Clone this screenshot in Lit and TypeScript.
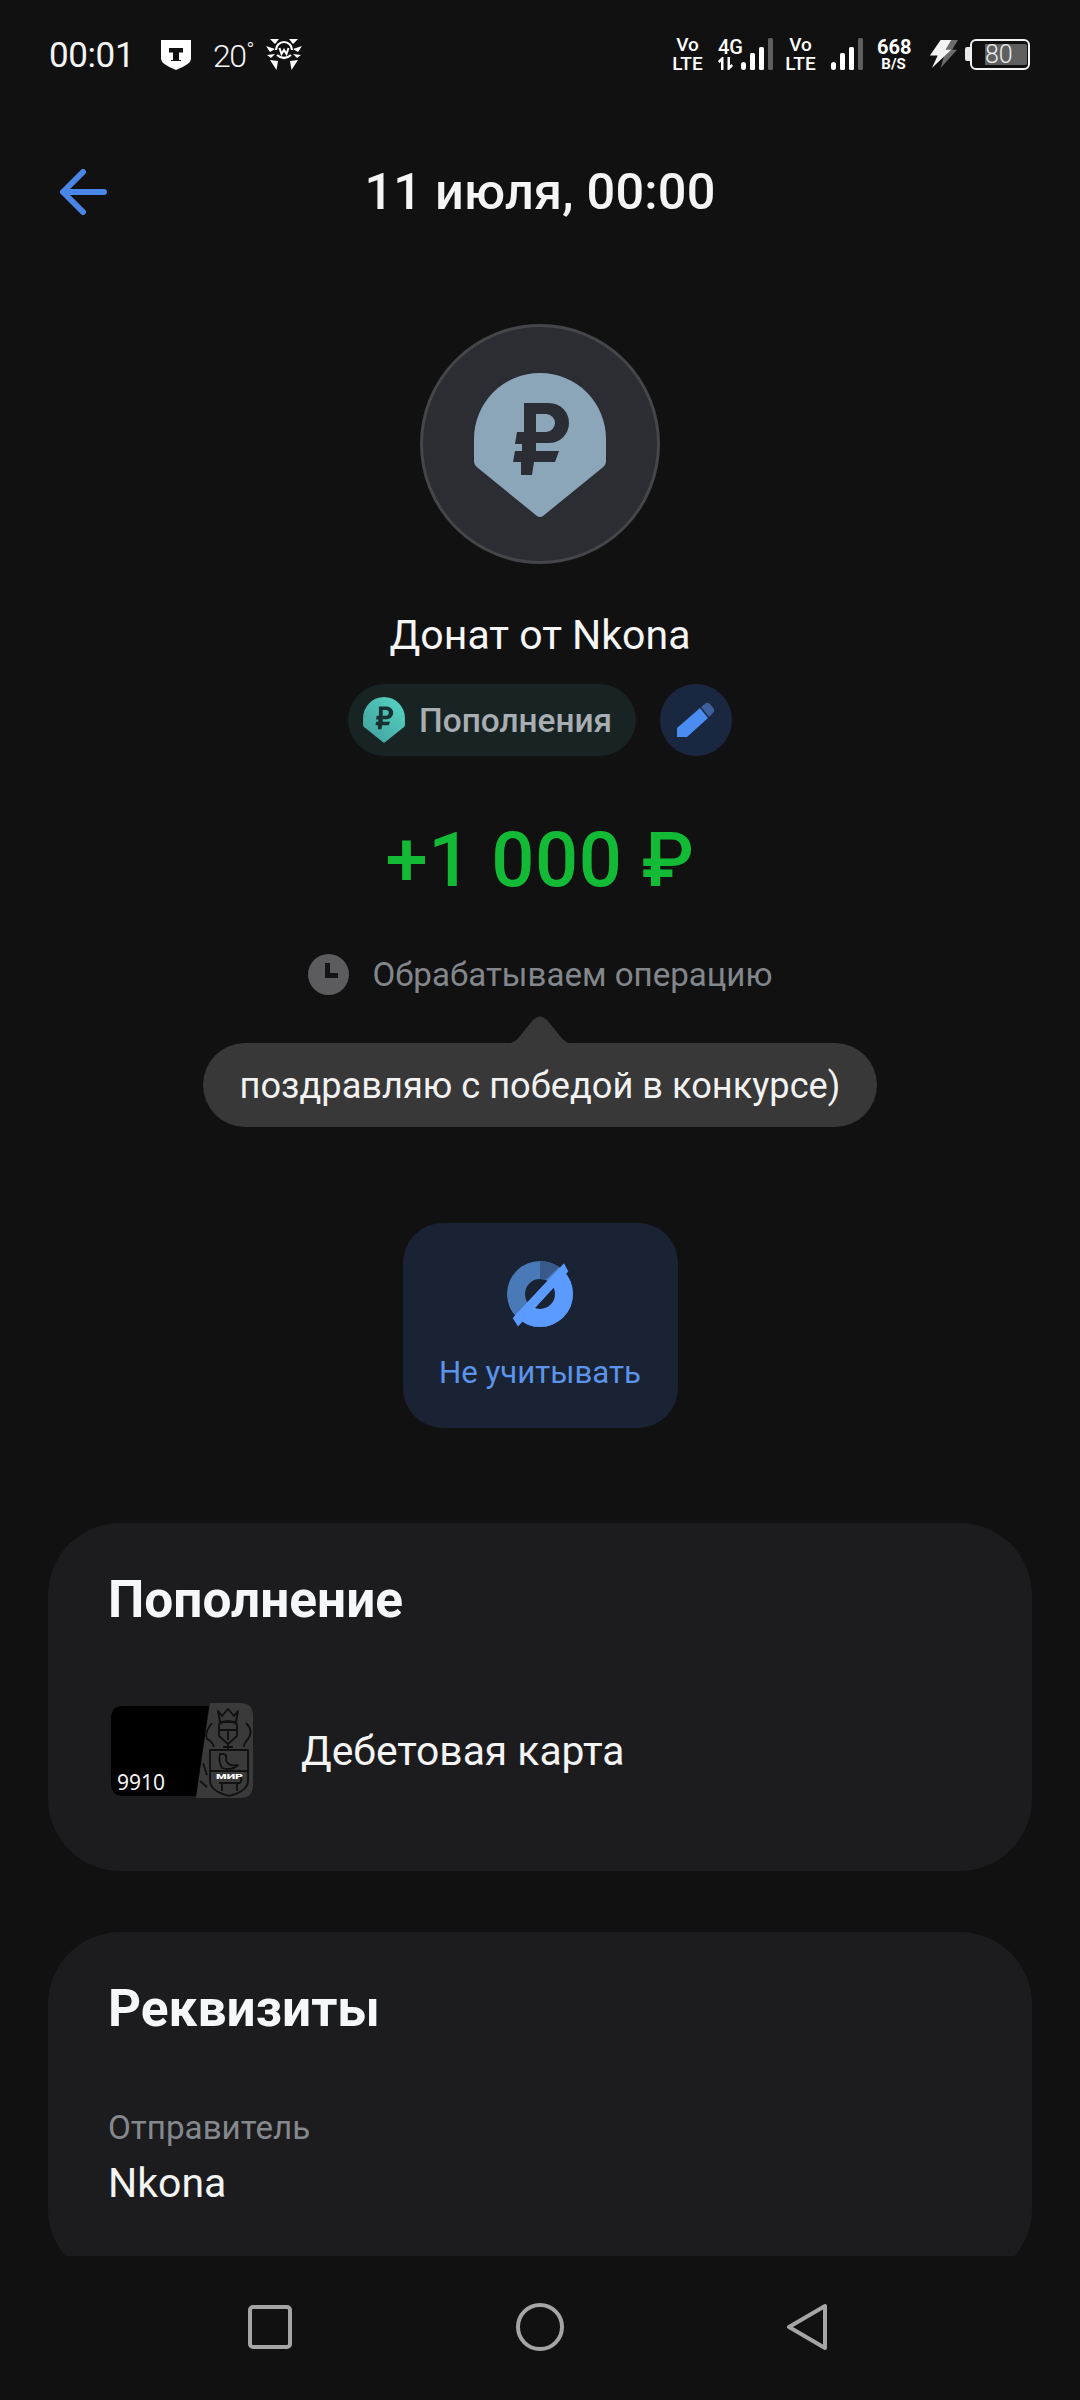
import { LitElement, html, css, svg } from "lit";
import { customElement } from "lit/decorators.js";

const RUB = "M50 30H75A20 20 0 0 1 75 70H62V78H85L81 89H60L58 102H47V89H39L41 78H48V71H41L43 59H50ZM62 41V59H72A9 9 0 0 0 72 41Z";
const SHIELD = "M0 66A66 66 0 0 1 132 66V88Q132 92 128 95L69 143Q66 145 63 143L4 95Q0 92 0 88Z";

const bars = () => svg`
  <svg class="bars" width="32" height="32" viewBox="0 0 32 32">
    <rect x="0" y="24" width="5" height="8" rx="2.5" fill="#fff"/>
    <rect x="9" y="15" width="5" height="17" rx="1.5" fill="#fff"/>
    <rect x="18" y="9" width="5" height="23" rx="1.5" fill="#fff"/>
    <rect x="27" y="0" width="5" height="32" rx="1.5" fill="#5e5e5e"/>
  </svg>`;

@customElement("app-root")
export class AppRoot extends LitElement {
  static styles = css`
    :host { display: block; font-family: Roboto, "Noto Sans", sans-serif; color: #fff; }
    .page { width: 1080px; height: 2400px; background: #111112; display: flex; flex-direction: column; overflow: hidden; }
    .status { height: 110px; flex: none; display: flex; align-items: center; padding: 0 50px 2px 49px; box-sizing: border-box; }
    .time { font-size: 35px; letter-spacing: -0.4px; width: 112px; font-weight: 400; color: #f4f4f4; margin-top: 3px; }
    .temp { font-size: 32px; font-weight: 300; letter-spacing: -1.6px; margin-left: 22px; width: 53px; color: #f4f4f4; white-space: nowrap; margin-top: 3px; }
    .temp span { font-size: 22px; vertical-align: 9px; letter-spacing: 0; margin-left: 1px; }
    .sicons { margin-left: auto; display: flex; align-items: center; height: 32px; }
    .volte { text-align: center; font-size: 19px; line-height: 19px; font-weight: 500; width: 31px; }
    .net { width: 23px; font-size: 20px; line-height: 18px; font-weight: 500; margin-left: 15px; white-space: nowrap; display: flex; flex-direction: column; gap: 1px; }
    .bars { display: block; }
    .speed { text-align: center; font-size: 20px; line-height: 20px; font-weight: 700; width: 33px; margin-left: 14px; white-space: nowrap; }
    .speed span { display: block; font-size: 15px; line-height: 14px; margin-left: -2px; margin-right: -2px; }
    .batt { width: 60px; height: 31px; border: 2.5px solid #f2f2f2; border-radius: 6px; box-sizing: border-box; display: flex; align-items: center; justify-content: flex-end; }
    .batt span { width: 42px; height: 21px; background: #5f5f5f; font-size: 25px; line-height: 21px; text-align: left; color: #ececec; font-weight: 300; border-radius: 0 2px 2px 0; margin-right: 1px; }
    .nub { width: 5px; height: 14px; background: #e8e8e8; border-radius: 2px 0 0 2px; margin-left: 7px; }
    .scroll { flex: 1; min-height: 0; overflow: hidden; display: flex; flex-direction: column; align-items: center; }
    .head { width: 100%; height: 162px; flex: none; display: flex; align-items: center; justify-content: center; position: relative; }
    .back { position: absolute; left: 60px; top: 59px; }
    .title { font-size: 50.5px; font-weight: 500; color: #f5f5f5; letter-spacing: 0.2px; }
    .avatar { width: 240px; height: 240px; box-sizing: border-box; border-radius: 50%; flex: none; margin-top: 52px; background: #2b2d33; border: 3px solid #45464a; display: flex; align-items: center; justify-content: center; }
    .avatar svg { margin-top: 3px; }
    .name { margin-top: 43px; font-size: 41px; line-height: 56px; color: #f6f6f6; }
    .chips { margin-top: 21px; display: flex; gap: 24px; height: 72px; flex: none; }
    .chip { height: 72px; box-sizing: border-box; border-radius: 36px; background: #182324; display: flex; align-items: center; gap: 14px; padding: 0 0 0 15px; font-size: 33.4px; font-weight: 500; color: #a8aeb2; width: 288px; }
    .pen { width: 72px; height: 72px; border-radius: 50%; background: #1a2740; display: flex; align-items: center; justify-content: center; }
    .amount { margin-top: 59px; font-size: 76px; line-height: 90px; font-weight: 500; color: #12ba35; letter-spacing: 0.5px; }
    .state { margin-top: 47px; height: 44px; display: flex; align-items: center; gap: 24px; font-size: 33.1px; color: #83878c; flex: none; }
    .bubble { position: relative; margin-top: 47px; width: 674px; height: 84px; flex: none; border-radius: 42px; background: #383839; display: flex; align-items: center; justify-content: center; font-size: 36.2px; color: #f2f2f2; }
    .tail { position: absolute; left: 304px; top: -27px; display: block; }
    .skip { margin-top: 96px; width: 275px; height: 205px; flex: none; border-radius: 40px; background: #1a2334; display: flex; flex-direction: column; align-items: center; padding-top: 37px; box-sizing: border-box; color: #5b94ea; font-size: 31.2px; }
    .skip div { margin-top: 25px; line-height: 40px; }
    .card { width: 984px; flex: none; box-sizing: border-box; border-radius: 72px; background: #1c1c1e; padding: 47px 60px 72px; }
    .c1 { margin-top: 95px; }
    .c2 { margin-top: 61px; padding-bottom: 74px; }
    .ctitle { font-size: 51.4px; line-height: 60px; font-weight: 700; color: #f6f7f9; }
    .row { margin-top: 73px; display: flex; align-items: center; gap: 47px; font-size: 40.8px; color: #f4f4f4; }
    .label { margin-top: 69px; font-size: 33.2px; line-height: 40px; color: #85888d; }
    .value { margin-top: 11px; font-size: 41px; line-height: 48px; color: #f4f4f4; }
    .nav { height: 144px; flex: none; background: #111112; display: flex; align-items: center; position: relative; }
    .nav svg { display: block; }
    .n1 { margin-left: 248px; margin-top: -2px; }
    .n2 { margin-left: 224px; margin-top: -2px; }
    .n3 { margin-left: 222px; margin-top: -2px; }
  `;

  render() {
    return html`<div class="page">
      <div class="status">
        <span class="time">00:01</span>
        <svg width="30" height="30" viewBox="0 0 30 30" style="margin-top:2px"><path d="M0 0H30V19Q30 24 15 30Q0 24 0 19Z" fill="#fff"/><path d="M8 8H22V12.500H18V20H20V21H10V20H12V12.500H8Z" fill="#111"/></svg>
        <span class="temp">20<span>°</span></span>
        <svg width="36" height="32" viewBox="0 0 36 32" fill="#fff">
          <path d="M4 1L13 1L9 6ZM23 1L32 1L27 6ZM0 8L9 11L4 14ZM36 8L27 11L32 14ZM1 17L9 16L5 20ZM35 17L27 16L31 20ZM4 22L12 23L10.500 32ZM24 23L32 22L25.500 32Z"/>
          <path d="M10 12A8 8 0 0 1 26 12" fill="none" stroke="#fff" stroke-width="2.200"/>
          <path d="M11 17Q18 23 25 17" fill="none" stroke="#fff" stroke-width="2.200"/>
          <path d="M13.500 10L15.500 16L18 12L20.500 16L22.500 10" fill="none" stroke="#fff" stroke-width="2"/>
        </svg>
        <div class="sicons">
          <div class="volte">Vo<br />LTE</div>
          <div class="net">
            <span>4G</span>
            <svg width="16" height="13" viewBox="0 0 16 13" fill="#fff"><path d="M0 4L4 0H5.500V13H3V4.500L1.500 6ZM9.500 0H12V8.500L13.500 7L15 9L11 13H9.500Z"/></svg>
          </div>
          ${bars()}
          <div class="volte" style="margin-left:12px">Vo<br />LTE</div>
          <div style="width:15px"></div>
          ${bars()}
          <div class="speed">668<span>B/S</span></div>
          <svg style="margin-left:19px" width="29" height="29" viewBox="0 0 30 30"><path d="M18 0H30L24 10H29L12 29L16 15H12Z" fill="#6c6c6c"/><path d="M12 0H23L17 10H23L3 29L9 16H1Z" fill="#f4f4f4"/></svg>
          <div class="nub"></div>
          <div class="batt"><span>80</span></div>
        </div>
      </div>
      <div class="scroll">
        <div class="head">
          <svg class="back" width="47" height="46" viewBox="0 0 47 46" fill="none" stroke="#4a85e8" stroke-width="6" stroke-linecap="round" stroke-linejoin="round"><path d="M23 3L3 23L23 43M4 23H44"/></svg>
          <span class="title">11 июля, 00:00</span>
        </div>
        <div class="avatar">
          <svg width="132" height="145" viewBox="0 0 132 145"><path d="${SHIELD}" fill="#8ba5b9"/><path d="${RUB}" fill="#2b2d35" fill-rule="evenodd"/></svg>
        </div>
        <div class="name">Донат от Nkona</div>
        <div class="chips">
          <div class="chip">
            <svg width="42" height="46" viewBox="0 0 132 145"><defs><linearGradient id="teal" x1="0" y1="1" x2="1" y2="0"><stop offset="0" stop-color="#3f9d9a"/><stop offset="1" stop-color="#58d6c8"/></linearGradient></defs><path d="${SHIELD}" fill="url(#teal)"/><path d="${RUB}" fill="#18302f" fill-rule="evenodd"/></svg>
            <span>Пополнения</span>
          </div>
          <div class="pen">
            <svg width="38" height="37" viewBox="0 0 38 37"><path d="M24 5L29 1Q31 0 33 2L37 7Q38 9 36 11L32 15Z" fill="#3c5f9c"/><path d="M23 6L31 16L10 35H0V26Z" fill="#4a8cf0"/></svg>
          </div>
        </div>
        <div class="amount">+1 000 ₽</div>
        <div class="state">
          <svg width="41" height="41" viewBox="0 0 41 41"><circle cx="20.500" cy="20.500" r="20.500" fill="#5c5c5e"/><path d="M17 9H22V19H30V24H17Z" fill="#141415"/></svg>
          <span>Обрабатываем операцию</span>
        </div>
        <div class="bubble">
          <svg class="tail" width="66" height="28" viewBox="0 0 66 28"><path d="M0 28Q8 27 13 20L26 4Q33 -3 40 4L53 20Q58 27 66 28Z" fill="#383839"/></svg>
          поздравляю с победой в конкурсе)
        </div>
        <div class="skip">
          <svg width="66" height="68" viewBox="0 0 66 68">
            <defs>
              <clipPath id="low"><path d="M57 3.300L5.700 58L30 70H80V0Z"/></clipPath>
              <clipPath id="lower"><path d="M61.300 11.600L11 66.600L40 80H80V10Z"/></clipPath>
            </defs>
            <path d="M0 34A33 33 0 1 1 66 34A33 33 0 1 1 0 34ZM18 34A15 15 0 1 0 48 34A15 15 0 1 0 18 34Z" fill="#4a79b8" fill-rule="evenodd"/>
            <path d="M33 1A33 33 0 0 1 52 7L38 20A15 15 0 0 0 33 19Z" fill="#39598a"/>
            <g clip-path="url(#low)"><circle cx="33" cy="34" r="33" fill="#5b9bff"/></g>
            <g clip-path="url(#lower)"><circle cx="33" cy="34" r="15" fill="#1a2334"/></g>
            <path d="M57 3.300L61.300 11.600L11 66.600L5.700 58Z" fill="#5b9bff"/>
          </svg>
          <div>Не учитывать</div>
        </div>
        <div class="card c1">
          <div class="ctitle">Пополнение</div>
          <div class="row">
            <svg width="144" height="96" viewBox="0 0 144 96" style="flex:none;margin-left:2px">
              <path d="M100 0H130Q143 0 143 13V82Q143 95 130 95H86Z" fill="#3a3a3a"/>
              <path d="M13 3H99L86 93H13Q1 93 1 80V16Q1 3 13 3Z" fill="#000"/>
              <g fill="none" stroke="#101010" stroke-width="1.800" stroke-linejoin="round">
                <path d="M108 8L112 13L118 6L124 13L128 8L126 19H110Z"/>
                <path d="M109 21Q118 15 127 21V33L118 41L109 33ZM110 27H126M118 27V37M118 41V47M113 44H123"/>
                <path d="M100 47H138V78Q138 88 119 93Q100 88 100 78ZM100 68H138"/>
                <path d="M110 51Q118 50 116 57Q118 64 128 62Q122 68 112 65Q108 58 110 51Z"/>
                <path d="M109 80H130M112 80V88M127 80V88M130 80Q133 76 130 74"/>
                <path d="M102 20Q94 30 97 36Q102 38 104 44M136 20Q144 28 138 36Q134 40 134 44M93 60L97 72M90 78L97 84"/>
              </g>
              <text x="7" y="87" font-family="'Noto Sans',sans-serif" font-size="21" fill="#f2f2f2">9910</text>
              <text x="106" y="76" font-family="Roboto,sans-serif" font-size="8" font-weight="900" fill="#fff" textLength="27" lengthAdjust="spacingAndGlyphs">МИР</text>
            </svg>
            <span>Дебетовая карта</span>
          </div>
        </div>
        <div class="card c2">
          <div class="ctitle">Реквизиты</div>
          <div class="label">Отправитель</div>
          <div class="value">Nkona</div>
        </div>
      </div>
      <div class="nav">
        <svg class="n1" width="44" height="44" viewBox="0 0 44 44"><rect x="2" y="2" width="40" height="40" rx="3" fill="none" stroke="#a5a5a5" stroke-width="4"/></svg>
        <svg class="n2" width="48" height="48" viewBox="0 0 48 48"><circle cx="24" cy="24" r="22" fill="none" stroke="#a5a5a5" stroke-width="4"/></svg>
        <svg class="n3" width="42" height="48" viewBox="0 0 42 48"><path d="M39 3V45L3 24Z" fill="none" stroke="#a5a5a5" stroke-width="4" stroke-linejoin="round"/></svg>
      </div>
    </div>`;
  }
}
